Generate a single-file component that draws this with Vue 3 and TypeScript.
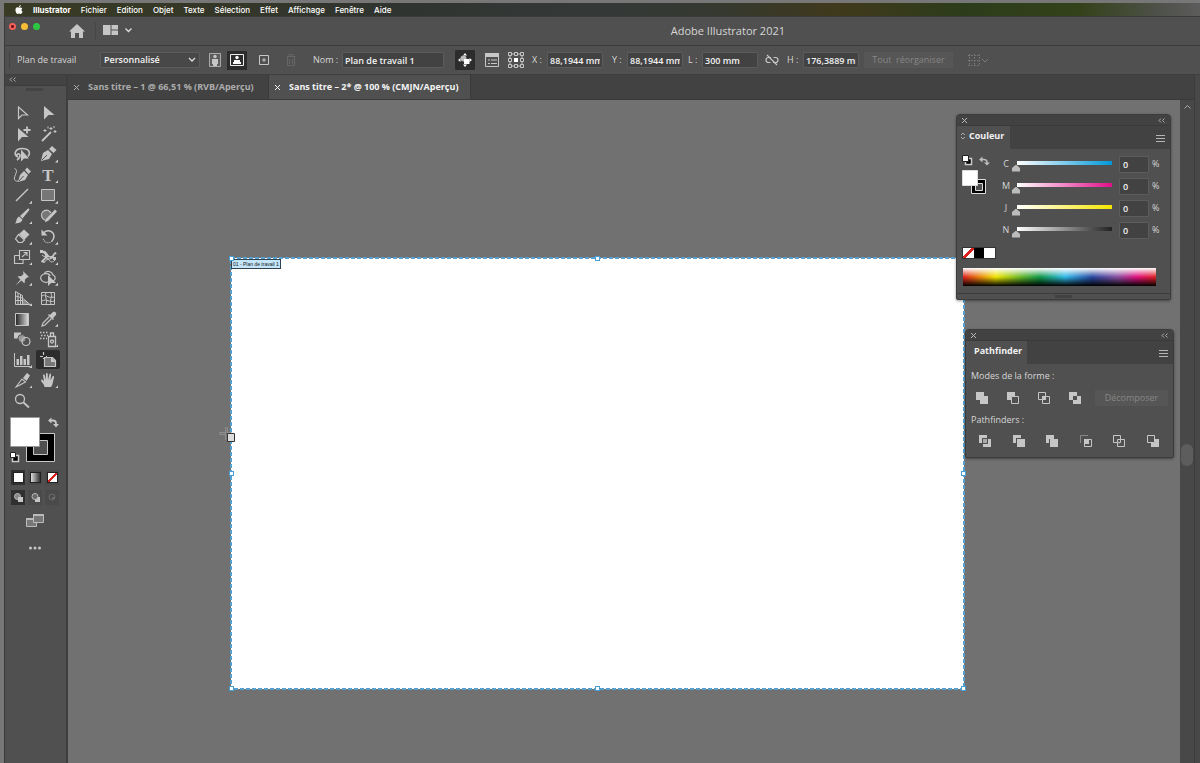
<script setup lang="ts">
import { ref } from 'vue'

interface Shape {
  d: string
  fill?: string
  stroke?: string
  width?: number
  dash?: string
}
interface Tool {
  name: string
  shapes: Shape[]
  more?: boolean
  glyph?: string
}

const ink = '#c6c6c6'
const back = '#505050'
const solid = (d: string, fill = ink): Shape => ({ d, fill })
const line = (d: string, width = 1, dash?: string): Shape => ({ d, stroke: ink, width, dash })

const menus = ['Fichier', 'Edition', 'Objet', 'Texte', 'Sélection', 'Effet', 'Affichage', 'Fenêtre', 'Aide']

const tools: Tool[] = [
  { name: 'Sélection directe', shapes: [line('M5.500 3v11.500l3.500-3.500h5.500z', 1.2)] },
  { name: 'Sélection', shapes: [solid('M5 2v13.500l4.500-4.500h6z')] },
  { name: 'Sélection de groupe', shapes: [solid('M5 3v13.500l4-4.500h6.500z'), line('M14 1.500v7M10.500 5h7', 1.8)] },
  { name: 'Baguette magique', shapes: [line('M3 16L12 7', 1.8), line('M12 2v3M10.500 3.500h3M16 5v3M14.500 6.500h3M6 4v3M4.500 5.500h3M15 1v2M9 1.500v2')] },
  { name: 'Lasso', shapes: [line('M5 12C0 10 2 3.500 9 3.500s9 4 6 8M5 12c-2-1-1-4 1-3s1 4-2 6', 1.6), solid('M8 4.500v12l3-3h5z')] },
  { name: 'Plume', more: true, shapes: [solid('M2 16l2-8 5-3 4 4-3 5zM10 4l3-3 4.500 4-3 3z'), { d: 'M3 15l5-5', stroke: back, width: 1 }] },
  { name: 'Courbure', shapes: [solid('M5 16l2-7 4-4 4 4-3 5zM12 4l2-2.500 4 4-2.500 2.500z'), line('M1.500 2.500c5 2-1 7 0 11 1 2 3 2 4 1'), { d: 'M6 15l4.500-5', stroke: back, width: 1 }] },
  { name: 'Texte', more: true, glyph: 'T', shapes: [] },
  { name: 'Segment de droite', more: true, shapes: [line('M3 15L15 3', 1.4)] },
  { name: 'Rectangle', more: true, shapes: [{ d: 'M2.500 3.500h13v11h-13z', fill: '#777777', stroke: ink, width: 1 }] },
  { name: 'Pinceau', more: true, shapes: [solid('M7 9l7.500-7c1.500-1 2.500 0 1.500 1.500L9.500 11.500zM6 9.500l3.500 3C8 16.500 5 16 2 16.500c2-2 1-5.500 4-7z')] },
  { name: 'Forme', more: true, shapes: [{ d: 'M9 13a5 5 0 1 1 3-7', fill: '#777777', stroke: ink, width: 1.2 }, solid('M16 2.500l2 2-8.500 9-3.500 2 1-3.500z')] },
  { name: 'Gomme', more: true, shapes: [{ d: 'M5.500 7.500l6 5.500-2.500 2.500h-3.500l-3-3.500z', stroke: ink, fill: back, width: 1.2 }, solid('M6 7l5-4.500 5.500 5-5 5z')] },
  { name: 'Rotation', more: true, shapes: [line('M5 5.500a6 6 0 0 1 8.500 0c2 2 2 6-.500 8.500', 1.6), line('M13 14c-3 3-8 2-9-3', 1.2, '1 1'), solid('M2.500 2.500v6h6z')] },
  { name: 'Mise à l’échelle', more: true, shapes: [line('M6.500 2.500h10v9h-10zM1.500 7.500h5M1.500 7.500v8h8.500v-4M9 9l5-4.500M10.500 4.500h3.500v3.500', 1.1)] },
  { name: 'Largeur', more: true, shapes: [solid('M4 3c4-1 4 4 7 5s3-4 6-4l.500 2c-3 0-2 4-5 5s-5 0-7 4l-3.500-1c1-3 3-3 4-5C6 7 6 5 3 5z'), { d: 'M5 13c3-1 2-4 6-3', stroke: back, width: 1 }, line('M3 7c2 2 5 2 7 5 1 2 4 3 6 0'), solid('M1 2h3v3h-3zM14 9h3v3h-3z')] },
  { name: 'Marionnette', more: true, shapes: [solid('M10 2l6 6-2 .500-2 2-.500 4-3-3-6 5 5-6-3-3 4-.500 2-2z')] },
  { name: 'Concepteur de forme', more: true, shapes: [line('M9 13a5 4 0 1 1-4-8c2-4 8-3 9 1 3 1 3 5 0 6M5 5c3-1 6 0 6 2', 1.2), solid('M9 6v11l3-3h5z')] },
  { name: 'Grille de perspective', more: true, shapes: [line('M2.500 2.500v13h15M2.500 2.500l7 4v9M5 4v11.500M7.500 5.500v10M2.500 7l7 2M2.500 11.500h7M10 9.500l7 6M10 12h3M10 14h5')] },
  { name: 'Filet', shapes: [line('M2.500 3.500h13v12h-13zM3 7c4-3 5 3 12 1M3 12c5-3 7 2 12 0M7 4c-2 4 2 6 0 11M12 4c2 4-2 7 0 11')] },
  { name: 'Dégradé', shapes: [{ d: 'M2.500 3.500h13v12h-13z', fill: 'url(#fade)', stroke: ink, width: 1 }] },
  { name: 'Pipette', more: true, shapes: [line('M10.500 6.500L4 13l-1 3 3-1 6.500-6.500', 1.2), solid('M9 5l1-1 1 1 3-3c2-1 4 1 3 3l-3 3 1 1-1 1z')] },
  { name: 'Dégradé de formes', shapes: [solid('M1 2.500h7v6h-7z'), { d: 'M5 8.500a4 4 0 1 1 8 0 4 4 0 0 1-8 0', fill: '#999999', stroke: back, width: 1 }, line('M9 11.500a4 4 0 1 1 8 0 4 4 0 0 1-8 0z', 1.2)] },
  { name: 'Pulvérisation', more: true, shapes: [line('M9.500 6.500h7v10h-7zM11.500 6v-3h3v3M11.500 11.500a1.500 1.500 0 1 0 3 0 1.500 1.500 0 1 0-3 0', 1.3), line('M1 2.500h9M2 5.500h7M1 8.500h7', 1.5, '1.500 1.500')] },
  { name: 'Graphe', more: true, shapes: [line('M1.500 2v13.500h15.500'), solid('M3.500 8h2.500v6h-2.500zM7 5h2.500v9h-2.500zM10.500 8h2.500v6h-2.500zM14 4h2.500v10h-2.500z')] },
  { name: 'Plan de travail', shapes: [line('M4.500 1v3M1 5.500h3M4.500 7v1M7 5.500h1', 1.2), { d: 'M5.500 6.500v9h11v-6l-3-3z', fill: '#777777', stroke: ink, width: 1.2 }, solid('M12 6l5 5h-5z')] },
  { name: 'Tranche', more: true, shapes: [line('M3 16l6-8 3.500 3c-3 1-4 3-9.500 5z', 1.1), solid('M10 7l4-5 3 2.500-3.500 5.500z')] },
  { name: 'Main', more: true, shapes: [solid('M5.500 16c0-3-3-4-3.500-7 1-1 2 0 3 1.500L4 4c1-1 2 0 2 1l1 4V3c0-1.500 1.700-1.500 1.700 0L9 9l1.500-6c.500-1 2-.500 1.500 1l-.500 5.500 2-4c1-1 2 0 1.500 1-1 3-1 7-3 9.500z')] },
  { name: 'Zoom', shapes: [line('M2.500 7a4.500 4.500 0 1 1 9 0 4.500 4.500 0 0 1-9 0', 1.3), line('M10.500 10.500l5.500 5', 1.8)] },
]

const currentTool = ref('Plan de travail')

const inks = ref([
  { key: 'C', value: 0, tone: 'cyan' },
  { key: 'M', value: 0, tone: 'magenta' },
  { key: 'J', value: 0, tone: 'yellow' },
  { key: 'N', value: 0, tone: 'black' },
])

const modes: Tool[] = [
  { name: 'Réunion', shapes: [solid('M1 1h8v4h4v8h-8v-4h-4z')] },
  { name: 'Soustraction', shapes: [solid('M1 1h8v4h-4v4h-4z'), line('M5.500 5.500h7v7h-7z')] },
  { name: 'Intersection', shapes: [line('M1.500 1.500h7v7h-7zM5.500 5.500h7v7h-7z'), solid('M5 5h4v4h-4z')] },
  { name: 'Exclusion', shapes: [solid('M1 1h8v4h4v8h-8v-4h-4z'), solid('M5 5h4v4h-4z', back)] },
]
const finders: Tool[] = [
  { name: 'Division', shapes: [solid('M1 1h8v3h-5v5h-3zM13 13h-8v-3h5v-5h3z'), solid('M5 5h4v4h-4z', '#a8a8a8')] },
  { name: 'Fond', shapes: [solid('M1 1h8v3h-5v5h-3z'), solid('M5 5h8v8h-8z')] },
  { name: 'Fusion', shapes: [solid('M1 1h8v4h4v8h-8v-4h-4z'), { d: 'M4.500 9v-4', stroke: back, width: 1 }] },
  { name: 'Rogner', shapes: [{ d: 'M1.500 9v-7.500h7.500', stroke: '#888888', width: 1 }, line('M10 5.500h2.500v7h-7v-2.500'), solid('M5 5h5v5h-5z')] },
  { name: 'Contour', shapes: [line('M1.500 1.500h7v7h-7zM5.500 5.500h7v7h-7z'), { d: 'M6 7v2h2', stroke: '#a0a0a0', width: 1 }] },
  { name: 'Soustraction arrière', shapes: [solid('M9 5h4v8h-8v-4h4z'), line('M1.500 1.500h7v7h-7z')] },
]

const handles = ['nw', 'n', 'ne', 'w', 'e', 'sw', 's', 'se']
</script>

<template>
  <div class="screen">
    <nav class="menubar" aria-label="Menus">
      <svg class="apple" viewBox="0 0 9 10"><path fill="#fff" d="M4.500 3C3 2 .5 2.500.5 5.500.5 8 2 10 3 10c.6 0 .9-.4 1.600-.4s1 .4 1.600.4C7.200 10 8.200 8.500 8.500 7.500 7 7 7 4.500 8.200 3.700 7.500 2.500 5.800 2.400 4.500 3zM4.500 2.500C4.400 1.200 5.400.2 6.500 0 6.600 1.300 5.700 2.400 4.500 2.500z" /></svg>
      <button class="menu strong">Illustrator</button>
      <button v-for="m in menus" :key="m" class="menu">{{ m }}</button>
    </nav>

    <div class="window">
      <header class="titlebar">
        <div class="lights">
          <button class="light red" aria-label="Fermer"></button>
          <button class="light amber" aria-label="Réduire"></button>
          <button class="light green" aria-label="Agrandir"></button>
        </div>
        <button class="icon home" aria-label="Accueil">
          <svg width="16" height="14" viewBox="0 0 16 14"><path :fill="ink" d="M8 0l8 7.500h-2v6.500h-4v-5h-4v5h-4v-6.500h-2z" /></svg>
        </button>
        <span class="rule"></span>
        <button class="icon arrange" aria-label="Disposition">
          <svg width="30" height="11" viewBox="0 0 30 11"><path :fill="ink" d="M0 0h7.500v10h-7.500zM8.500 0h6.500v4.500h-6.500zM8.500 5.500h6.500v4.500h-6.500z" /><path d="M22.500 3.500l3 3 3-3" fill="none" stroke="#ddd" stroke-width="1.300" /></svg>
        </button>
        <h1>Adobe Illustrator 2021</h1>
      </header>

      <div class="controls">
        <span class="mode">Plan de travail</span>
        <select class="preset" aria-label="Format prédéfini"><option>Personnalisé</option></select>
        <button class="icon port" aria-label="Portrait">
          <svg width="15" height="16" viewBox="0 0 15 16"><path d="M1.500 1.500h11v13h-11z" fill="#5d5d5d" stroke="#aaa" /><circle cx="7" cy="4.500" r="1.700" :fill="ink" /><path :fill="ink" d="M4 7h6v5h-1v2h-4v-2h-1z" /></svg>
        </button>
        <button class="icon land" aria-label="Paysage">
          <svg width="16" height="14" viewBox="0 0 16 14"><path d="M1.500 1.500h13v11h-13z" fill="none" stroke="#eee" /><circle cx="8" cy="4.500" r="1.700" fill="#fff" /><path fill="#fff" d="M5 7h6v2h1v2h-8v-2h1z" /></svg>
        </button>
        <button class="icon add" aria-label="Nouveau plan de travail">
          <svg width="14" height="14" viewBox="0 0 14 14"><path d="M2.500 2.500h9v9h-9zM7 5v4M5 7h4" fill="none" stroke="#c6c6c6" /></svg>
        </button>
        <button class="icon trash" disabled aria-label="Supprimer">
          <svg width="14" height="14" viewBox="0 0 14 14"><path d="M2.500 3.500h9M5 3v-1.500h4v1.500M3.500 4v8.500h7v-8.500M5.500 6v5M8.500 6v5" fill="none" stroke="#666" /></svg>
        </button>
        <label class="lab name-lab" for="f-name">Nom :</label>
        <input id="f-name" class="field name" type="text" value="Plan de travail 1">
        <button class="icon move" aria-label="Déplacer avec le contenu">
          <svg width="16" height="16" viewBox="0 0 16 16"><path fill="#fff" d="M8 1l2 2.500h-4zM8 15l2-2.500h-4zM1 8l2.500-2v4zM15 8l-2.500-2v4z" /><circle cx="6.500" cy="6.500" r="3" fill="#bbb" /><path fill="#fff" d="M7 7h5.500v5h-5.500z" /></svg>
        </button>
        <button class="icon opts" aria-label="Options">
          <svg width="14" height="14" viewBox="0 0 14 14"><path d="M.5.500h13v13h-13z" fill="none" :stroke="ink" /><path :fill="ink" d="M0 0h14v4h-14z" /><path d="M3 7h2M6 7h6M3 10.500h2M6 10.500h6" :stroke="ink" /></svg>
        </button>
        <button class="icon anchor" aria-label="Point de référence">
          <svg width="18" height="18" viewBox="0 0 18 18"><path d="M1.500 1.500h3v3h-3zM7.500 1.500h3v3h-3zM13.500 1.500h3v3h-3zM1.500 7.500h3v3h-3zM13.500 7.500h3v3h-3zM1.500 13.500h3v3h-3zM7.500 13.500h3v3h-3zM13.500 13.500h3v3h-3zM5 3h2M11 3h2M5 15h2M11 15h2M3 5v2M3 11v2M15 5v2M15 11v2" fill="none" :stroke="ink" /><path fill="#fff" d="M7 7h4v4h-4z" /></svg>
        </button>
        <label class="lab x-lab" for="f-x">X :</label>
        <input id="f-x" class="field" type="text" value="88,1944 mm">
        <label class="lab y-lab" for="f-y">Y :</label>
        <input id="f-y" class="field" type="text" value="88,1944 mm">
        <label class="lab l-lab" for="f-l">L :</label>
        <input id="f-l" class="field" type="text" value="300 mm">
        <button class="icon link" aria-label="Conserver les proportions">
          <svg width="14" height="14" viewBox="0 0 14 14"><path d="M6 4.500h-2.500a2.500 2.500 0 0 0 0 5h2M8.500 4.500h2a2.500 2.500 0 0 1 0 5h-2.500M2 2l10 10" fill="none" :stroke="ink" stroke-width="1.200" /></svg>
        </button>
        <label class="lab h-lab" for="f-h">H :</label>
        <input id="f-h" class="field" type="text" value="176,3889 mm">
        <button class="rearrange" disabled>Tout&nbsp; réorganiser</button>
        <button class="icon snap" disabled aria-label="Aligner">
          <svg width="22" height="14" viewBox="0 0 22 14"><path d="M1 2.500h12M1 7.500h12M1 12.500h12M2.500 1v12M7.500 1v12M12.500 1v12" fill="none" stroke="#7c7c7c" stroke-dasharray="1.500 1.500" /><path d="M15 6l3 3 3-3" fill="none" stroke="#7c7c7c" /></svg>
        </button>
      </div>

      <main class="work">
        <aside class="toolbar">
          <button class="collapse" aria-label="Réduire la barre d’outils">
            <svg width="8" height="5" viewBox="0 0 8 5"><path d="M3 .5l-2 2 2 2M6.500.5l-2 2 2 2" fill="none" stroke="#aaa" /></svg>
          </button>
          <span class="grip"></span>
          <div class="tools">
            <button v-for="t in tools" :key="t.name" class="tool" :class="{ on: t.name === currentTool }" :aria-label="t.name" @click="currentTool = t.name">
              <svg width="18" height="18" viewBox="0 0 18 18">
                <defs><linearGradient id="fade"><stop offset="0" stop-color="#222" /><stop offset="1" stop-color="#ddd" /></linearGradient></defs>
                <path v-for="(s, i) in t.shapes" :key="i" :d="s.d" :fill="s.fill ?? 'none'" :stroke="s.stroke ?? 'none'" :stroke-width="s.width" :stroke-dasharray="s.dash" />
                <text v-if="t.glyph" x="9" y="15" class="type">{{ t.glyph }}</text>
              </svg>
              <i v-if="t.more" class="corner"></i>
            </button>
          </div>
          <div class="paint">
            <svg width="60" height="52" viewBox="0 0 60 52">
              <path d="M21.500 19.500h28v28h-28z" fill="#000" stroke="#c8c8c8" /><path d="M28.500 26.500h14v14h-14z" fill="#505050" stroke="#c8c8c8" />
              <path d="M5.500 3.500h29v29h-29z" fill="#fff" stroke="#999" />
              <path d="M7.500 41.500h6v6h-6z" fill="#000" stroke="#ccc" stroke-width="1.500" /><path d="M5.500 38.500h5v5h-5z" fill="#fff" stroke="#222" />
              <path d="M46 6.500h2q3 0 3 3v1" fill="none" stroke="#c6c6c6" stroke-width="1.800" /><path d="M43 6.500l3.500-3v6zM48 10h6l-3 3.500z" fill="#c6c6c6" />
            </svg>
          </div>
          <div class="trio">
            <button class="cell on" aria-label="Couleur"><i class="chip white"></i></button>
            <button class="cell" aria-label="Dégradé"><i class="chip grad"></i></button>
            <button class="cell" aria-label="Sans"><i class="chip none"></i></button>
          </div>
          <div class="trio">
            <button class="cell on" aria-label="Dessin normal"><svg width="11" height="11" viewBox="0 0 11 11"><circle cx="4.500" cy="4.500" r="3" fill="#888" stroke="#bbb" /><path d="M5 5h5v5h-5z" fill="#c6c6c6" /></svg></button>
            <button class="cell" aria-label="Dessin arrière"><svg width="11" height="11" viewBox="0 0 11 11"><path d="M5 5h5v5h-5z" fill="#c6c6c6" /><circle cx="5" cy="4.500" r="3" fill="#686868" stroke="#bbb" /></svg></button>
            <button class="cell" disabled aria-label="Dessin intérieur"><svg width="11" height="11" viewBox="0 0 11 11"><circle cx="5" cy="5" r="3" fill="none" stroke="#6c6c6c" /><path d="M5 5h3v2h-3z" fill="#6c6c6c" /></svg></button>
          </div>
          <button class="icon screens" aria-label="Mode d’écran">
            <svg width="20" height="14" viewBox="0 0 20 14"><path d="M1.500 5.500h10v8h-10z" fill="#777" stroke="#bbb" /><path d="M8.500 1.500h10v8h-10z" fill="#777" stroke="#bbb" /><path d="M8 2h11M1 6h7" stroke="#bbb" stroke-width="2" /></svg>
          </button>
          <button class="icon dots" aria-label="Modifier la barre d’outils">
            <svg width="14" height="4" viewBox="0 0 14 4"><circle cx="2.500" cy="2" r="1.500" :fill="ink" /><circle cx="7" cy="2" r="1.500" :fill="ink" /><circle cx="11.500" cy="2" r="1.500" :fill="ink" /></svg>
          </button>
        </aside>

        <section class="document">
          <div class="tabs" role="tablist">
            <button class="tab" role="tab">
              <svg width="7" height="7" viewBox="0 0 7 7"><path d="M1 1l5 5M6 1l-5 5" stroke="currentColor" /></svg>
              Sans titre – 1 @ 66,51 % (RVB/Aperçu)
            </button>
            <button class="tab active" role="tab" aria-selected="true">
              <svg width="7" height="7" viewBox="0 0 7 7"><path d="M1 1l5 5M6 1l-5 5" stroke="currentColor" /></svg>
              Sans titre – 2* @ 100 % (CMJN/Aperçu)
            </button>
          </div>
          <div class="stage">
            <div class="canvas">
              <div class="artboard">
                <svg class="ants" aria-hidden="true"><rect width="100%" height="100%" /></svg>
                <span class="tag">01 - Plan de travail 1</span>
                <i v-for="h in handles" :key="h" class="handle" :class="h"></i>
                <svg class="cursor" width="18" height="18" viewBox="0 0 18 18"><path d="M8.500 0v13M1 6.500h13" stroke="#a8a8a8" stroke-width="2" fill="none" /><path d="M8.500 0v13M1 6.500h13" stroke="#555" stroke-width=".6" fill="none" /><path d="M9.500 6.500h7v8h-7z" fill="#ddd" stroke="#333" /></svg>
              </div>
            </div>
            <div class="scroll">
              <svg width="9" height="6" viewBox="0 0 9 6"><path d="M1.500 4.500l3-3 3 3" fill="none" stroke="#aaa" /></svg>
              <span class="knob"></span>
            </div>
          </div>
        </section>
        <span class="edge"></span>
      </main>
    </div>

    <section class="panel color" aria-label="Couleur">
      <div class="grab">
        <svg width="7" height="7" viewBox="0 0 7 7"><path d="M1 1l5 5M6 1l-5 5" stroke="#bbb" /></svg>
        <svg width="8" height="5" viewBox="0 0 8 5"><path d="M3 .5l-2 2 2 2M6.500.5l-2 2 2 2" fill="none" stroke="#aaa" /></svg>
      </div>
      <div class="head">
        <h2><svg width="6" height="8" viewBox="0 0 6 8"><path d="M1 3l2-2 2 2M1 5l2 2 2-2" fill="none" stroke="#aaa" /></svg>Couleur</h2>
        <button class="icon burger" aria-label="Menu du panneau"><svg width="10" height="8" viewBox="0 0 10 8"><path d="M0 1.500h9M0 4.500h9M0 7.500h9" stroke="#b5b5b5" /></svg></button>
      </div>
      <div class="mix">
        <svg class="fillstroke" width="32" height="46" viewBox="0 0 32 46">
          <path d="M3.500 3.500h6v6h-6z" fill="#000" stroke="#ccc" stroke-width="1.500" /><path d="M.5.500h6v6h-6z" fill="#fff" stroke="#222" />
          <path d="M20 4.500h2q3 0 3 3v1" fill="none" stroke="#bbb" stroke-width="1.500" /><path d="M17 4.500l3.500-3v6zM22 7.500h6l-3 3z" fill="#bbb" />
          <path d="M9.500 24.500h14v14h-14z" fill="#000" stroke="#ddd" /><path d="M13.500 28.500h7v7h-7z" fill="#505050" stroke="#ddd" />
          <path d="M.5 15.500h15v15h-15z" fill="#fff" stroke="#ddd" />
        </svg>
        <div class="inks">
          <div v-for="c in inks" :key="c.key" class="ink">
            <label :for="'ink-' + c.key">{{ c.key }}</label>
            <input v-model.number="c.value" class="slide" :class="c.tone" type="range" min="0" max="100" :aria-label="c.key">
            <input :id="'ink-' + c.key" v-model.number="c.value" class="field num" type="text">
            <span>%</span>
          </div>
        </div>
      </div>
      <div class="basics">
        <button class="none" aria-label="Sans"></button><button class="dark" aria-label="Noir"></button><button class="white" aria-label="Blanc"></button>
      </div>
      <div class="spectrum" role="img" aria-label="Spectre CMJN"></div>
      <div class="foot"><i></i></div>
    </section>

    <section class="panel path" aria-label="Pathfinder">
      <div class="grab">
        <svg width="7" height="7" viewBox="0 0 7 7"><path d="M1 1l5 5M6 1l-5 5" stroke="#bbb" /></svg>
        <svg width="8" height="5" viewBox="0 0 8 5"><path d="M3 .5l-2 2 2 2M6.500.5l-2 2 2 2" fill="none" stroke="#aaa" /></svg>
      </div>
      <div class="head">
        <h2>Pathfinder</h2>
        <button class="icon burger" aria-label="Menu du panneau"><svg width="10" height="8" viewBox="0 0 10 8"><path d="M0 1.500h9M0 4.500h9M0 7.500h9" stroke="#b5b5b5" /></svg></button>
      </div>
      <div class="group">
        <h3>Modes de la forme :</h3>
        <div class="row modes">
          <button v-for="m in modes" :key="m.name" class="icon" :aria-label="m.name">
            <svg width="14" height="14" viewBox="0 0 14 14"><path v-for="(s, i) in m.shapes" :key="i" :d="s.d" :fill="s.fill ?? 'none'" :stroke="s.stroke ?? 'none'" :stroke-width="s.width" /></svg>
          </button>
          <button class="expand" disabled>Décomposer</button>
        </div>
        <h3>Pathfinders :</h3>
        <div class="row finders">
          <button v-for="m in finders" :key="m.name" class="icon" :aria-label="m.name">
            <svg width="14" height="14" viewBox="0 0 14 14"><path v-for="(s, i) in m.shapes" :key="i" :d="s.d" :fill="s.fill ?? 'none'" :stroke="s.stroke ?? 'none'" :stroke-width="s.width" /></svg>
          </button>
        </div>
      </div>
    </section>
  </div>
</template>

<style>
html, body { margin: 0; background: #777777; }
</style>

<style scoped>
* { box-sizing: border-box; }
.screen {
  position: relative;
  display: flex;
  flex-direction: column;
  min-height: 100vh;
  padding: 3px 0 0 4px;
  overflow: hidden;
  background: #777777;
  color: #d6d6d6;
  font: 9px/12px "Open Sans", "Noto Sans", sans-serif;
}
button { margin: 0; padding: 0; border: 0; background: none; color: inherit; font: inherit; }
svg { display: block; flex: none; }
h1, h2, h3 { margin: 0; font: inherit; }

.menubar {
  display: flex;
  align-items: center;
  gap: 10px;
  height: 13px;
  padding-left: 11px;
  background: linear-gradient(90deg, #393b25 0, #343727 17%, #303430 33%, #343938 50%, #35392f 60%, #40391c 70%, #2c3c1b 80%, #34421a 90%, #50524c 97%, #5c5c5c);
  color: #ffffff;
}
.apple { width: 8px; height: 9px; }
.menu { font: 500 8px/12px Inter, "Liberation Sans", sans-serif; white-space: nowrap; }
.menu.strong { font-weight: 700; }

.window { display: flex; flex-direction: column; flex: 1; border-left: 1px solid #3a3a3a; border-top: 1px solid #3c3c3c; background: #505050; }
.titlebar { display: flex; align-items: center; height: 29px; border-bottom: 1px solid #3c3c3c; }
.lights { display: flex; gap: 5px; align-self: flex-start; width: 64px; padding: 6px 0 0 4px; }
.light { width: 7px; height: 7px; border-radius: 50%; }
.red { background: radial-gradient(circle, #6a1010 0 1px, #f4605a 2px); }
.amber { background: #f8bd35; }
.green { background: #2dc743; }
.icon { display: flex; align-items: center; justify-content: center; flex: none; }
.rule { width: 1px; height: 18px; margin: 0 7px 0 10px; background: #464646; }
.arrange { padding-bottom: 2px; }
h1 { flex: 1; padding-left: 45%; font-size: 11px; line-height: 16px; white-space: nowrap; }

.controls { display: flex; align-items: center; height: 29px; border-bottom: 1px solid #3e3e3e; }
.mode { flex: none; width: 91px; margin-left: 4px; padding-left: 7px; border-left: 1px solid #424242; line-height: 16px; white-space: nowrap; }
.preset, .field {
  height: 16px;
  border: 1px solid #5c5c5c;
  border-radius: 1px;
  background-color: #424242;
  color: #f2f2f2;
  font: 600 9px/12px "Open Sans", "Noto Sans", sans-serif;
}
.preset {
  flex: none;
  width: 100px;
  padding: 0 3px;
  appearance: none;
  background-color: #484848;
  background-image: url("data:image/svg+xml,%3Csvg xmlns='http://www.w3.org/2000/svg' width='8' height='6'%3E%3Cpath d='M1 1l3 3 3-3' fill='none' stroke='%23ddd' stroke-width='1.300'/%3E%3C/svg%3E");
  background-position: right 3px center;
  background-repeat: no-repeat;
}
.field { width: 56px; min-width: 0; padding: 0 2px; }
.field.name { width: 102px; }
.port { width: 15px; height: 18px; margin-left: 8px; }
.land { width: 20px; height: 19px; margin-left: 4px; background: #2c2c2c; }
.add { width: 14px; margin-left: 10px; }
.trash { width: 14px; margin-left: 13px; }
.lab { flex: none; white-space: nowrap; }
.name-lab { width: 29px; margin-left: 15px; }
.move { width: 20px; height: 20px; margin-left: 11px; border-radius: 1px; background: #2c2c2c; }
.opts { margin-left: 10px; }
.anchor { margin-left: 8px; }
.x-lab { width: 15px; margin-left: 7px; }
.y-lab { width: 15px; margin-left: 9px; }
.l-lab { width: 14px; margin-left: 5px; }
.link { margin-left: 7px; }
.h-lab { width: 16px; margin-left: 8px; }
.rearrange { flex: none; width: 89px; height: 16px; margin-left: 5px; background: #565656; color: #868686; }
.snap { margin-left: 14px; }

.work { display: flex; flex: 1; }
.toolbar { display: flex; flex-direction: column; align-items: flex-start; width: 63px; border-right: 2px solid #3e3e3e; }
.collapse { display: flex; align-items: center; align-self: stretch; height: 11px; padding: 0 0 2px 4px; border-bottom: 1px solid #3c3c3c; background: #434343; }
.grip { width: 17px; height: 3px; margin: 2px 0 0 21px; background: #444444; }
.tools { display: grid; grid-template-columns: 26px 26px; grid-template-rows: repeat(15, 1fr); height: 308px; margin: 12px 0 0 4px; }
.tool { position: relative; display: flex; align-items: center; justify-content: center; border: 1px solid transparent; border-radius: 3px; }
.tool.on { background: #2c2c2c; background-clip: padding-box; }
.corner { position: absolute; right: 2px; bottom: 1px; width: 3px; height: 3px; background: #d0d0d0; clip-path: polygon(100% 0, 100% 100%, 0 100%); }
.type { font: 700 17px "Liberation Serif", serif; fill: #c6c6c6; text-anchor: middle; }
.paint { margin-top: 3px; }
.trio { display: flex; gap: 3px; margin: 5px 0 0 6px; }
.paint + .trio { margin-top: 4px; }
.cell { display: flex; align-items: center; justify-content: center; width: 14px; height: 15px; background: #4a4a4a; }
.cell.on { background: #303030; }
.chip { width: 11px; height: 11px; border: 1px solid #222222; }
.white { background: #ffffff; }
.grad { background: linear-gradient(90deg, #dddddd, #333333); }
.none { background: linear-gradient(to bottom right, #ffffff 40%, #d8201c 40% 60%, #ffffff 60%); }
.screens { margin: 8px 0 0 20px; }
.dots { margin: 19px 0 0 23px; }

.document { display: flex; flex-direction: column; flex: 1; min-width: 0; }
.tabs { display: flex; height: 25px; border-bottom: 1px solid #3a3a3a; background: #424242; }
.tab { display: flex; align-items: center; gap: 8px; width: 201px; padding: 0 5px; border-right: 1px solid #3a3a3a; color: #acacac; font-weight: 700; white-space: nowrap; }
.tab.active { width: 202px; background: #505050; color: #f4f4f4; }
.stage { display: flex; flex: 1; }
.canvas { position: relative; flex: 1; background: #717171; }
.artboard { position: absolute; top: 158px; left: 163px; width: 733px; height: 431px; background: #ffffff; }
.ants { position: absolute; inset: 0; width: 100%; height: 100%; overflow: visible; }
.ants rect { fill: none; stroke: #56a0cf; stroke-width: 2; stroke-dasharray: 4 2; }
.tag { position: absolute; top: 1px; left: 0; padding: 0 1px; border: 1px solid #30414f; background: #c4e4f7; color: #101820; font: 5px/8px "Liberation Sans", Arial, sans-serif; white-space: nowrap; }
.handle { position: absolute; width: 5px; height: 5px; margin: -2px; border: 1px solid #4a9ed6; background: #ffffff; }
.nw, .n, .ne { top: 0; }
.sw, .s, .se { bottom: 0; }
.w, .e { top: 50%; margin-top: -3px; }
.nw, .w, .sw { left: 0; }
.n, .s { left: 50%; margin-left: -3px; }
.ne, .e, .se { right: 0; }
.cursor { position: absolute; top: 169px; left: -13px; }
.scroll { display: flex; flex-direction: column; align-items: center; width: 14px; padding-top: 4px; background: #484848; }
.knob { width: 12px; height: 22px; margin-top: 334px; border-radius: 6px; background: #5d5d5d; }
.edge { width: 6px; border-left: 1px solid #3c3c3c; background: #484848; }

.panel { position: absolute; border: 1px solid #3c3c3c; border-radius: 4px 4px 2px 2px; overflow: hidden; background: #505050; box-shadow: 0 1px 3px #00000066; }
.color { top: 114px; right: 29px; width: 215px; }
.path { top: 329px; right: 26px; width: 209px; padding-bottom: 8px; }
.grab { display: flex; align-items: center; justify-content: space-between; height: 11px; padding: 0 4px; border-bottom: 1px solid #3a3a3a; background: #424242; }
.head { display: flex; align-items: center; justify-content: space-between; height: 23px; padding-right: 4px; background: #424242; }
.head h2 { display: flex; align-items: center; gap: 3px; height: 23px; padding: 0 6px 3px 3px; background: #505050; color: #f2f2f2; font-weight: 700; }
.path .head h2 { padding: 0 5px 3px 8px; }
.mix { display: flex; padding: 6px 4px 0 5px; }
.inks { flex: 1; display: flex; flex-direction: column; gap: 4px; padding-left: 7px; }
.ink { display: grid; grid-template-columns: 10px 100px 38px 1fr; align-items: center; height: 18px; }
.ink label { text-align: center; }
.ink > .num { width: 30px; height: 17px; margin-left: 8px; padding: 0 3px; }
.ink span { padding-left: 3px; }
.slide { appearance: none; width: 100px; height: 14px; margin: 3px 0 0 1px; background: none; }
.slide::-webkit-slider-runnable-track { height: 14px; background: linear-gradient(90deg, #ffffff, var(--tone)) no-repeat 5px 2px / 95px 4px; }
.slide::-webkit-slider-thumb { appearance: none; width: 8px; height: 7px; margin-top: 6px; background: #bcbcbc; clip-path: polygon(50% 0, 100% 50%, 100% 100%, 0 100%, 0 50%); }
.cyan { --tone: #0098d8; }
.magenta { --tone: #e0108a; }
.yellow { --tone: #f4e600; }
.black { --tone: #222222; }
.basics { display: flex; width: 34px; margin: 8px 0 0 5px; border: 1px solid #333333; }
.basics button { flex: 1; height: 10px; }
.basics .dark { background: #000000; }
.spectrum {
  height: 18px;
  margin: 9px 14px 0 6px;
  background:
    linear-gradient(#ffffff 0, #ffffff00 50%, #00000000 50%, #000000 100%),
    linear-gradient(90deg, #e0201c 0, #f0e400 17%, #52b030 32%, #109848 40%, #30b8e8 53%, #2848a0 67%, #8850a0 80%, #e01080 90%, #e02020 100%);
}
.foot { height: 6px; margin-top: 7px; border-top: 1px solid #3c3c3c; }
.foot i { display: block; width: 17px; height: 3px; margin: 1px auto 0; background: #424242; }

.group { padding: 6px 5px 0; }
.group h3 { line-height: 12px; }
.row { display: flex; align-items: center; }
.modes { gap: 17px; height: 16px; margin: 8px 0; padding-left: 4px; }
.expand { flex: 1; height: 16px; margin-left: -4px; background: #565656; color: #868686; }
.finders { justify-content: space-between; height: 16px; margin-top: 7px; padding: 0 8px 0 7px; }
</style>
